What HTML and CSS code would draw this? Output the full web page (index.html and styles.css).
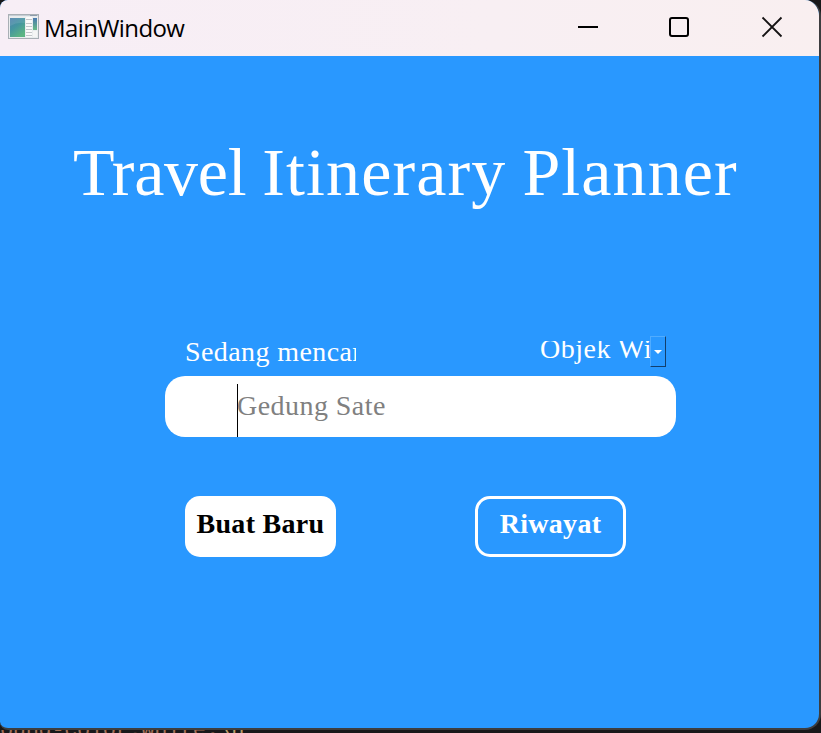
FILE: index.html
```
<!DOCTYPE html>
<html lang="id">
<head>
<meta charset="utf-8">
<title>MainWindow</title>
<link rel="stylesheet" href="styles.css">
</head>
<body>
<div class="window">
  <header class="titlebar">
    <svg class="app-icon" width="32" height="26" viewBox="0 0 32 26">
      <defs>
        <linearGradient id="pane" x1="0" y1="0" x2=".6" y2="1"><stop offset="0" stop-color="#4d80ae"/><stop offset=".5" stop-color="#4596a0"/><stop offset="1" stop-color="#5cb583"/></linearGradient>
        <linearGradient id="strip" x1="0" y1="0" x2="0" y2="1"><stop offset="0" stop-color="#4a79b0"/><stop offset="1" stop-color="#69bb85"/></linearGradient>
      </defs>
      <rect x=".5" y=".5" width="30" height="24" fill="#e9ecee" stroke="#a9afb5"/>
      <path d="M1 1.500h29" stroke="#c4ccd4"/><path d="M22 1.500h7" stroke="#8d9bab"/>
      <rect x="2" y="4" width="15" height="19" fill="url(#pane)"/>
      <path d="M2 12Q9 8 17 9V4H2z" fill="#fff" opacity=".1"/>
      <rect x="18" y="3" width="6" height="20" fill="#fafafa"/>
      <path d="M18 5.500h6M18 9.500h6M18 12.500h6M18 15.500h6M18 18.500h6M18 21.500h6" stroke="#c3c6ca"/>
      <rect x="25" y="4" width="4" height="12" fill="url(#strip)"/>
      <rect x="25" y="17" width="4" height="6" fill="#f5f5f5"/>
    </svg>
    <span class="caption">MainWindow</span>
    <svg class="controls" width="206" height="22" viewBox="0 0 206 22" fill="none" stroke="#000" stroke-width="2">
      <path d="M0 11h20"/>
      <rect x="92" y="2" width="18" height="18" rx="2"/>
      <path d="M184.500 1.500l19 19M203.500 1.500l-19 19" stroke="#151313" stroke-width="1.800"/>
    </svg>
  </header>
  <main class="content">
    <h1 class="title"><span class="tight">Travel</span> Itinerary Planner</h1>
    <div class="search">
      <div class="labels">
        <div class="label">Sedang mencari</div>
        <div class="combo">
          <div class="combo-text">Objek Wisata</div>
          <div class="combo-button"><svg width="8" height="4" viewBox="0 0 8 4"><path d="M0 0h8L4 4z" fill="#fff"/></svg></div>
        </div>
      </div>
      <div class="field"><span class="caret"></span><span class="placeholder">Gedung Sate</span></div>
    </div>
    <div class="actions">
      <div class="button primary">Buat Baru</div>
      <div class="button outline">Riwayat</div>
    </div>
  </main>
</div>
<div class="editor">ound-color:white;<span class="escape">\n</span></div>
</body>
</html>
```
FILE: styles.css
```
* { box-sizing: border-box; }
body {
  margin: 0;
  width: 821px;
  height: 733px;
  overflow: hidden;
  background: #18181a;
}
.window {
  width: 821px;
  height: 730px;
  border-right: 2px solid #3d3d3f;
  border-bottom: 2px solid #3d3d3f;
  border-radius: 8px 16px 16px 8px;
  overflow: hidden;
  background: #2998ff;
}
.titlebar {
  display: flex;
  height: 56px;
  padding: 14px 0 0 8px;
  background: linear-gradient(90deg, #f7eef6, #f8eff3 60%, #f9eff0);
}
.caption {
  margin: -1px 0 0 4px;
  font: 24px/30px "Open Sans", "Noto Sans", sans-serif;
  letter-spacing: -0.6px;
  width: 534px;
  color: #000;
}
.controls { margin-top: 2px; }
.content {
  padding-top: 76px;
  color: #fff;
  font: 28px/30px "Liberation Serif", serif;
}
.title {
  margin: 0 0 0 73px;
  font-size: 68px;
  font-weight: 400;
  line-height: 80px;
  white-space: nowrap;
  letter-spacing: 1.1px;
  word-spacing: -2px;
}
.tight { letter-spacing: -0.3px; }
.search { width: 511px; margin: 124px 0 0 165px; }
.labels {
  display: flex;
  justify-content: space-between;
  height: 40px;
  padding: 0 10px 0 20px;
}
.label {
  width: 171px;
  height: 34px;
  overflow: hidden;
  white-space: nowrap;
  line-height: 32px;
  letter-spacing: 0.4px;
}
.combo { display: flex; height: 31px; width: 126px; }
.combo-text {
  width: 110px;
  height: 26px;
  margin-top: 5px;
  overflow: hidden;
  white-space: nowrap;
  line-height: 15px;
  letter-spacing: 0.5px;
}
.combo-button {
  display: flex;
  align-items: center;
  justify-content: center;
  width: 16px;
  height: 31px;
  border: 1px solid #50acff;
  border-right-color: #123f6d;
  border-bottom-color: #123f6d;
}
.field {
  display: flex;
  height: 61px;
  padding-left: 72px;
  border-radius: 20px;
  background: #fff;
  color: #808080;
  line-height: 59px;
}
.caret { width: 1px; height: 53px; margin-top: 8px; background: #000; }
.placeholder { margin-left: -1px; letter-spacing: 0.45px; }
.actions { display: flex; gap: 139px; margin: 59px 0 0 185px; }
.button {
  width: 151px;
  height: 61px;
  border-radius: 15px;
  text-align: center;
  font-weight: 700;
  white-space: nowrap;
  line-height: 55px;
  letter-spacing: 0.3px;
}
.primary { background: #fff; color: #000; }
.outline { border: 3px solid #fff; line-height: 49px; }
.editor {
  height: 3px;
  overflow: hidden;
  font: 22px/1px "Liberation Mono", monospace;
  letter-spacing: -0.35px;
  color: #a16e57;
}
.escape { color: #b89b68; }
```
